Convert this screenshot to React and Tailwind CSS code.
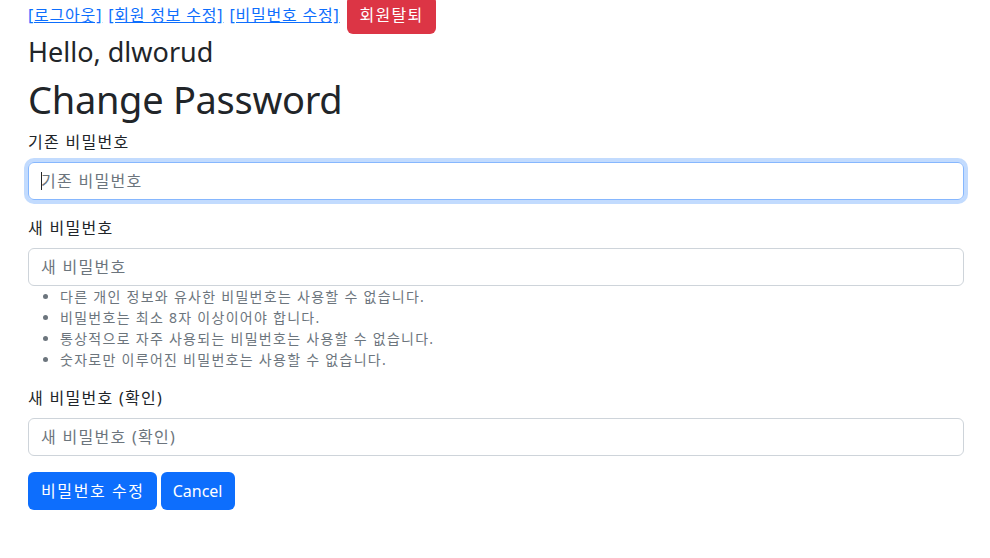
import React from 'react';

const RULES = [
  '다른 개인 정보와 유사한 비밀번호는 사용할 수 없습니다.',
  '비밀번호는 최소 8자 이상이어야 합니다.',
  '통상적으로 자주 사용되는 비밀번호는 사용할 수 없습니다.',
  '숫자로만 이루어진 비밀번호는 사용할 수 없습니다.',
];

const font = { fontFamily: '"Noto Sans", "Noto Sans CJK KR", sans-serif' };

const App = () => {
  return (
    <div className="min-h-screen bg-white pl-[28px] pr-[26px] text-[#212529] text-[16px]" style={font}>
      {/* top links */}
      <div className="-mt-[4px] h-[38px] flex items-baseline tracking-[0.05em]">
        <a href="#" className="text-[#0d6efd] underline leading-[38px]">[로그아웃]</a>
        <span className="w-[6px]" />
        <a href="#" className="text-[#0d6efd] underline leading-[38px]">[회원 정보 수정]</a>
        <span className="w-[6px]" />
        <a href="#" className="text-[#0d6efd] underline leading-[38px]">[비밀번호 수정]</a>
        <span className="w-[7px]" />
        <button className="h-[38px] pl-[13px] pr-[12px] rounded-[6px] bg-[#dc3545] text-white leading-[38px] tracking-[0.08em]">회원탈퇴</button>
      </div>

      <h3 className="mt-[2px] text-[27px] leading-[32px]">Hello, dlworud</h3>
      <h1 className="mt-[8px] text-[38px] leading-[46px] tracking-[-0.3px]">Change Password</h1>

      <form className="tracking-[0.08em]">
        <div className="mb-[16px]">
          <label className="block mt-[8px] mb-[8px] leading-[24px]">기존 비밀번호</label>
          <div className="relative">
            <input
              type="password"
              placeholder="기존 비밀번호"
              className="block w-full h-[38px] px-[12px] rounded-[6px] border border-[#86b7fe] shadow-[0_0_0_4px_rgba(13,110,253,0.25)] outline-none placeholder:text-[#6c757d]"
            />
            <span className="absolute left-[13px] top-[10px] w-px h-[18px] bg-[#212529]" />
          </div>
        </div>

        <div className="mb-[16px]">
          <label className="block mb-[8px] leading-[24px]">새 비밀번호</label>
          <input
            type="password"
            placeholder="새 비밀번호"
            className="block w-full h-[38px] px-[12px] rounded-[6px] border border-[#ced4da] outline-none placeholder:text-[#6c757d]"
          />
          <ul className="list-disc pl-[32px] mb-[16px] text-[14px] leading-[21px] text-[#6c757d]">
            {RULES.map((r) => (
              <li key={r}>{r}</li>
            ))}
          </ul>
        </div>

        <div className="mb-[16px]">
          <label className="block mb-[8px] leading-[24px]">새 비밀번호 (확인)</label>
          <input
            type="password"
            placeholder="새 비밀번호 (확인)"
            className="block w-full h-[38px] px-[12px] rounded-[6px] border border-[#ced4da] outline-none placeholder:text-[#6c757d]"
          />
        </div>

        <div className="flex gap-[4px]">
          <button type="submit" className="h-[38px] pl-[13px] pr-[12px] rounded-[6px] bg-[#0d6efd] text-white tracking-[0.1em]">비밀번호 수정</button>
          <button type="button" className="h-[38px] px-[12px] rounded-[6px] bg-[#0d6efd] text-white tracking-normal">Cancel</button>
        </div>
      </form>
    </div>
  );
};

export default App;
